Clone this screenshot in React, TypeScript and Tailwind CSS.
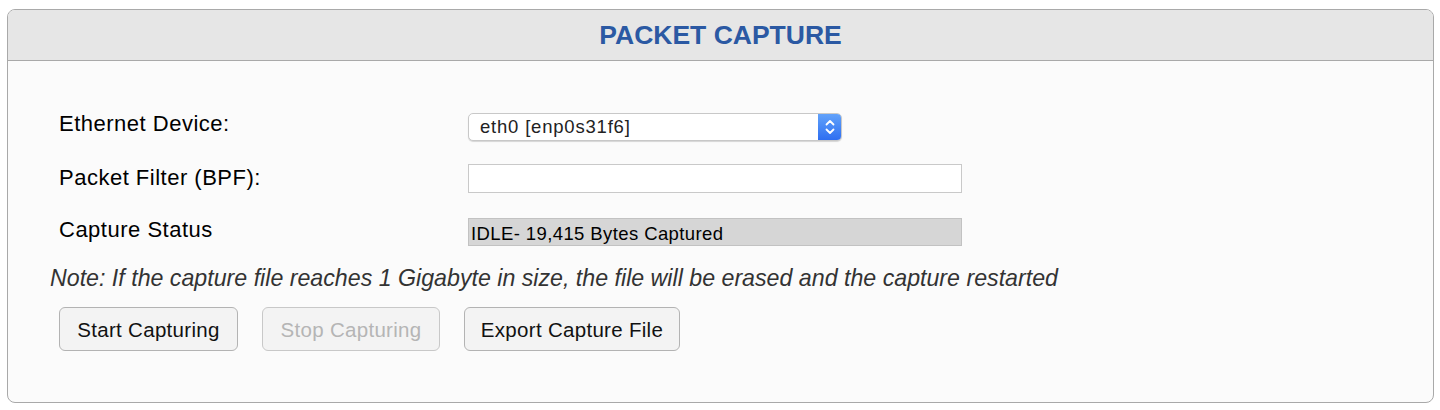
export default function App() {
  return (
    <div className="min-h-screen bg-white pt-[9px] pl-[7px] pr-[6px] font-['Liberation_Sans',Arial,sans-serif]">
      <div className="h-[394px] rounded-[8px] border border-[#a9a9a9] bg-[#fbfbfb] overflow-hidden">
        {/* Header */}
        <div className="h-[51px] bg-[#e6e6e6] border-b border-[#a9a9a9] flex items-center justify-center">
          <h1 className="text-[26.5px] leading-none font-bold text-[#2b59a3] pt-[1px]">PACKET CAPTURE</h1>
        </div>

        {/* Form rows */}
        <div className="pt-[51px] pl-[51px]">
          <div className="flex items-center h-[29px]">
            <label className="w-[409px] text-[22px] leading-[29px] tracking-[0.5px] text-black -mt-[6px]">Ethernet Device:</label>
            <div className="w-[374px] h-[28px] flex rounded-[5px] border border-[#c8c8c8] bg-white shadow-[0_1px_1px_rgba(0,0,0,0.15)] overflow-hidden">
              <span className="flex-1 pl-[11px] text-[18.5px] tracking-[0.8px] leading-[26px] text-[#222]">eth0 [enp0s31f6]</span>
              <span className="w-[23px] bg-gradient-to-b from-[#62a2fa] to-[#2f6ef1] flex items-center justify-center">
                <svg width="12" height="20" viewBox="0 0 12 20" fill="none" stroke="white" strokeWidth="1.8" strokeLinecap="round" strokeLinejoin="round">
                  <path d="M2.5 7.5l3.5-3.5 3.5 3.5" />
                  <path d="M2.5 12.5l3.5 3.5 3.5-3.5" />
                </svg>
              </span>
            </div>
          </div>

          <div className="flex items-center h-[29px] mt-[23px]">
            <label className="w-[409px] text-[22px] leading-[29px] tracking-[0.5px] text-black -mt-[2px]">Packet Filter (BPF):</label>
            <input className="w-[494px] h-[29px] border border-[#c9c9c9] bg-white outline-none" />
          </div>

          <div className="flex items-center h-[28px] mt-[25px]">
            <label className="w-[409px] text-[22px] leading-[29px] tracking-[0.5px] text-black -mt-[6px]">Capture Status</label>
            <div className="w-[494px] h-[28px] border border-[#c2c2c2] bg-[#d6d6d6] pl-[2px] text-[18.5px] tracking-[0.4px] leading-[30px] text-black">
              IDLE- 19,415 Bytes Captured
            </div>
          </div>
        </div>

        <p className="mt-[17px] pl-[42px] text-[23.2px] leading-[30px] italic text-[#333]">
          Note: If the capture file reaches 1 Gigabyte in size, the file will be erased and the capture restarted
        </p>

        <div className="flex gap-[24px] pl-[51px] mt-[14px]">
          <button className="w-[179px] h-[44px] pt-[2px] rounded-[6px] border border-[#b3b3b3] bg-[#f3f3f3] text-[20.5px] tracking-[0.3px] text-[#111]">
            Start Capturing
          </button>
          <button disabled className="w-[178px] h-[44px] pt-[2px] rounded-[6px] border border-[#c8c8c8] bg-[#f3f3f3] text-[20.5px] tracking-[0.3px] text-[#b5b5b5]">
            Stop Capturing
          </button>
          <button className="w-[216px] h-[44px] pt-[2px] rounded-[6px] border border-[#b3b3b3] bg-[#f3f3f3] text-[20.5px] tracking-[0.3px] text-[#111]">
            Export Capture File
          </button>
        </div>
      </div>
    </div>
  );
}
